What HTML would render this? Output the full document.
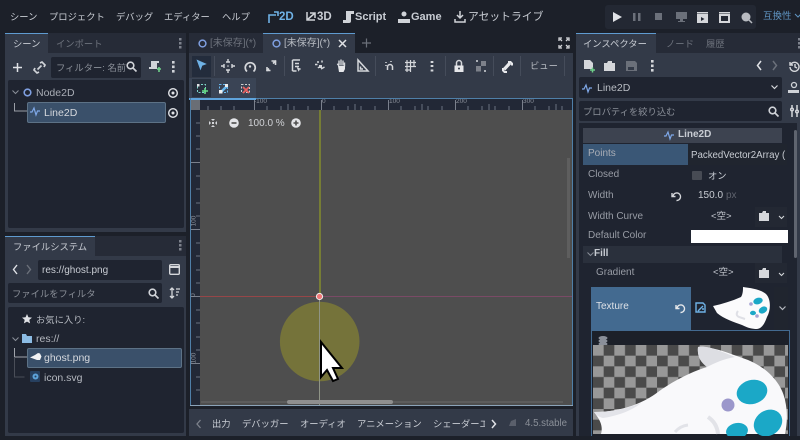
<!DOCTYPE html>
<html lang="ja"><head><meta charset="utf-8"><title>Godot</title>
<style>
html,body{margin:0;padding:0;background:#1c2029}
#r{position:relative;width:800px;height:440px;overflow:hidden;background:#1c2029;font-family:"Liberation Sans","Noto Sans CJK JP",sans-serif;font-size:10px;color:#c8ccd3;filter:blur(.3px)}
#r div,#r span.t{position:absolute}
.t{white-space:nowrap;line-height:16px;margin-top:1px}
.j{font-size:9.3px}
.m{color:#a4a8b0}
.p{background:#333a48}
.k{background:#1f2430}
svg{position:absolute;overflow:visible}
</style></head><body><div id="r">

<!-- top menu -->
<span class="t j" style="left:10px;top:8px">シーン</span>
<span class="t j" style="left:49px;top:8px">プロジェクト</span>
<span class="t j" style="left:116px;top:8px">デバッグ</span>
<span class="t j" style="left:164px;top:8px">エディター</span>
<span class="t j" style="left:222px;top:8px">ヘルプ</span>
<svg style="left:267px;top:10px" width="14" height="14" fill="none" stroke="#6fb2e6" stroke-width="1.600"><path d="M2 13V5h7M7 2h4v4"/></svg>
<span class="t" style="left:279px;top:8px;font-size:11.500px;font-weight:bold;color:#6fb2e6">2D</span>
<svg style="left:305px;top:11px" width="12" height="12" fill="none" stroke="#d0d3d8" stroke-width="1.500"><path d="M2 1v8h8M5 2l5 0v5M2 9l8-7"/></svg>
<span class="t" style="left:317px;top:8px;font-size:11.500px;font-weight:bold">3D</span>
<svg style="left:343px;top:11px" width="11" height="12" fill="#d0d3d8"><path d="M3 0h8v3H8v7a2 2 0 0 1-2 2H0V9h3z"/></svg>
<span class="t" style="left:355px;top:8px;font-size:11px;font-weight:bold">Script</span>
<svg style="left:398px;top:11px" width="12" height="12" fill="#d0d3d8"><circle cx="6" cy="3" r="2.500"/><path d="M0 8h12v4H0z"/></svg>
<span class="t" style="left:411px;top:8px;font-size:11px;font-weight:bold">Game</span>
<svg style="left:454px;top:10px" width="12" height="13" fill="none" stroke="#d0d3d8" stroke-width="1.500"><path d="M6 1v7M3 5l3 3 3-3M1 9v3h10V9"/></svg>
<span class="t" style="left:468px;top:8px;font-size:10.800px">アセットライブ</span>

<div style="left:605px;top:5px;width:151px;height:24px;background:#232833;border-radius:3px"></div>
<svg style="left:612px;top:11px" width="140" height="13">
<path d="M1 1l9 5-9 5z" fill="#e0e2e6"/>
<path d="M21 2h2.500v8H21zM26 2h2.500v8H26z" fill="#6b707a"/>
<path d="M43 2h7v7h-7z" fill="#6b707a"/>
<path d="M64 1h11v7h-4v2h2v1h-7v-1h2V8h-4z" fill="#6b707a"/>
<path d="M85 3h11v9H85zM85 1h11v1.500H85z" fill="#d5d7db"/><path d="M89 6l3.500 2L89 10z" fill="#232833"/>
<path d="M107 3h11v9h-11zM107 1h11v1.500h-11z" fill="#d5d7db"/><path d="M109 5h7v5h-7z" fill="#232833"/>
<circle cx="134" cy="6" r="4.500" fill="#b8bbc1"/><path d="M137 9l3 3" stroke="#b8bbc1" stroke-width="1.500"/>
</svg>
<span class="t" style="left:763px;top:8px;font-size:9.500px;color:#5f94c2">互換性</span>
<svg style="left:795px;top:14px" width="5" height="5" fill="none" stroke="#5f94c2"><path d="M0 0l3 3 3-3"/></svg>

<!-- scene panel -->
<div class="p" style="left:5px;top:53px;width:181px;height:179px"></div>
<div class="p" style="left:5px;top:33px;width:43px;height:20px;border-top:1px solid #5f9bd0;box-sizing:border-box"></div>
<div style="left:48px;top:33px;width:138px;height:20px;background:#262b37"></div>
<span class="t j" style="left:13px;top:35px">シーン</span>
<span class="t j" style="left:56px;top:35px;color:#6d727c">インポート</span>
<svg style="left:179px;top:38px" width="4" height="11" fill="#7d828c"><rect width="2.500" height="2.500"/><rect y="4" width="2.500" height="2.500"/><rect y="8" width="2.500" height="2.500"/></svg>
<svg style="left:12px;top:62px" width="11" height="11" stroke="#e0e2e6" stroke-width="1.500"><path d="M5.500 1v9M1 5.500h9"/></svg>
<svg style="left:33px;top:61px" width="13" height="13" fill="none" stroke="#d0d3d8" stroke-width="1.700"><path d="M4.500 8.500l4-4M2 7l-1 2 3 3 2-1M7 2l2-1 3 3-1 2"/></svg>
<div class="k" style="left:51px;top:57px;width:90px;height:21px;border-radius:2px"></div>
<span class="t j m" style="left:56px;top:59px;width:70px;overflow:hidden;color:#8b9099">フィルター: 名前</span>
<svg style="left:126px;top:61px" width="11" height="11" fill="none" stroke="#d0d3d8" stroke-width="1.600"><circle cx="4.500" cy="4.500" r="3.300"/><path d="M7 7l3.500 3.500"/></svg>
<svg style="left:148px;top:60px" width="13" height="14"><path d="M3 1h8v2H9v6H1V7h2z" fill="#d0d3d8"/><path d="M9 9h4M11 7v5" stroke="#6fd08a" stroke-width="1.600"/></svg>
<svg style="left:172px;top:61px" width="4" height="12" fill="#d0d3d8"><rect width="2.600" height="2.600"/><rect y="4.500" width="2.600" height="2.600"/><rect y="9" width="2.600" height="2.600"/></svg>
<div class="k" style="left:8px;top:80px;width:176px;height:148px;border-radius:2px"></div>
<svg style="left:12px;top:90px" width="7" height="5" fill="none" stroke="#8a8f99"><path d="M.5.500l3 3 3-3"/></svg>
<svg style="left:23px;top:88px" width="10" height="10" fill="none" stroke="#7f9fe0" stroke-width="1.600"><circle cx="4.500" cy="4.500" r="3.300"/></svg>
<span class="t" style="left:36px;top:84px;font-size:10.500px;color:#a9adb5">Node2D</span>
<svg style="left:167px;top:87px" width="12" height="12" fill="none" stroke="#e0e2e6" stroke-width="1.400"><circle cx="6" cy="6" r="4.300"/><circle cx="6" cy="6" r=".8" fill="#e0e2e6"/></svg>
<svg style="left:14px;top:103px" width="14" height="10" fill="none" stroke="#9a9ea6" stroke-width="1"><path d="M.5 0v8h13"/></svg>
<div style="left:27px;top:102px;width:137px;height:19px;background:#3a506a;border:1px solid #5d7286;border-radius:2px"></div>
<svg style="left:30px;top:107px" width="10" height="9" fill="none" stroke="#7fa8e8" stroke-width="1.200"><path d="M0 5h2l2-4 2 7 1.500-4H10"/></svg>
<span class="t" style="left:44px;top:104px;font-size:10.500px;color:#d5d8dd">Line2D</span>
<svg style="left:167px;top:107px" width="12" height="12" fill="none" stroke="#e0e2e6" stroke-width="1.400"><circle cx="6" cy="6" r="4.300"/><circle cx="6" cy="6" r=".8" fill="#e0e2e6"/></svg>

<!-- filesystem panel -->
<div class="p" style="left:5px;top:256px;width:181px;height:180px"></div>
<div class="p" style="left:5px;top:236px;width:90px;height:20px;border-top:1px solid #5f9bd0;box-sizing:border-box"></div>
<div style="left:95px;top:236px;width:91px;height:20px;background:#262b37"></div>
<span class="t j" style="left:13px;top:238px">ファイルシステム</span>
<svg style="left:179px;top:240px" width="4" height="11" fill="#7d828c"><rect width="2.500" height="2.500"/><rect y="4" width="2.500" height="2.500"/><rect y="8" width="2.500" height="2.500"/></svg>
<svg style="left:12px;top:264px" width="24" height="11" fill="none" stroke-width="1.400"><path d="M5 1L1.500 5.500 5 10" stroke="#e0e2e6"/><path d="M15 1l3.500 4.500L15 10" stroke="#6b707a"/></svg>
<div class="k" style="left:38px;top:260px;width:124px;height:20px;border-radius:2px"></div>
<span class="t" style="left:42px;top:262px;font-size:10px">res://ghost.png</span>
<svg style="left:169px;top:264px" width="12" height="11" fill="none" stroke="#d5d7db" stroke-width="1.400"><rect x=".7" y=".7" width="9.600" height="9.600" rx="1"/><path d="M1 3h9" stroke-width="2"/></svg>
<div class="k" style="left:8px;top:283px;width:154px;height:20px;border-radius:2px"></div>
<span class="t j" style="left:12px;top:285px;color:#8b9099">ファイルをフィルタ</span>
<svg style="left:148px;top:288px" width="11" height="11" fill="none" stroke="#d0d3d8" stroke-width="1.600"><circle cx="4.500" cy="4.500" r="3.300"/><path d="M7 7l3.500 3.500"/></svg>
<svg style="left:169px;top:288px" width="12" height="12" fill="none" stroke="#d5d7db" stroke-width="1.300"><path d="M3 0v10M1 2l2-2 2 2M1 8l2 2 2-2M7 1h4M7 4h3M7 7h2"/></svg>
<div class="k" style="left:8px;top:307px;width:176px;height:126px;border-radius:2px"></div>
<svg style="left:22px;top:314px" width="10" height="10" fill="#e0e2e6"><path d="M5 0l1.400 3.300 3.600.3-2.700 2.300.8 3.500L5 7.600 1.900 9.400l.8-3.500L0 3.600l3.600-.3z"/></svg>
<span class="t j" style="left:36px;top:311px;color:#b5b9c0">お気に入り:</span>
<svg style="left:12px;top:337px" width="7" height="5" fill="none" stroke="#8a8f99"><path d="M.5.500l3 3 3-3"/></svg>
<svg style="left:22px;top:334px" width="10" height="9" fill="#8cbce4"><path d="M0 0h4l1 2h5v7H0z"/></svg>
<span class="t" style="left:36px;top:330px;font-size:10.500px;color:#b5b9c0">res://</span>
<svg style="left:14px;top:348px" width="14" height="32" fill="none"><path d="M.5 0v9h13" stroke="#a0a4ab"/><path d="M.5 9v20h10" stroke="#4a4e58"/></svg>
<div style="left:27px;top:348px;width:153px;height:18px;background:#3a506a;border:1px solid #5d7286;border-radius:2px"></div>
<svg style="left:30px;top:352px" width="12" height="10" fill="#f2f3f5"><path d="M0 5.500 5 3 8 1l2 .5 1.500 3L10 8H7L3 6.500z"/></svg>
<span class="t" style="left:44px;top:349px;font-size:10.500px;color:#d5d8dd">ghost.png</span>
<div style="left:30px;top:371px;width:10px;height:11px;background:#27405f;border-radius:1px"></div>
<svg style="left:32px;top:373px" width="7" height="7"><circle cx="3.500" cy="3.500" r="3" fill="#5da3da"/><circle cx="3.500" cy="3.500" r="1" fill="#27405f"/></svg>
<span class="t" style="left:44px;top:369px;font-size:10.500px;color:#b5b9c0">icon.svg</span>

<!-- center tabs -->
<div style="left:189px;top:33px;width:74px;height:20px;background:#262b37"></div>
<div style="left:263px;top:33px;width:92px;height:20px;background:#333a48;border-top:1px solid #5f9bd0;box-sizing:border-box"></div>
<svg style="left:198px;top:39px" width="9" height="9" fill="none" stroke="#7f9fe0" stroke-width="1.500"><circle cx="4.500" cy="4.500" r="3.400"/></svg>
<span class="t" style="left:210px;top:35px;font-size:10px;color:#6d727c">[未保存](*)</span>
<svg style="left:272px;top:39px" width="9" height="9" fill="none" stroke="#7f9fe0" stroke-width="1.500"><circle cx="4.500" cy="4.500" r="3.400"/></svg>
<span class="t" style="left:284px;top:35px;font-size:10px;color:#b9bdc4">[未保存](*)</span>
<svg style="left:338px;top:39px" width="9" height="9" stroke="#e0e2e6" stroke-width="1.500"><path d="M1 1l7 7M8 1L1 8"/></svg>
<svg style="left:361px;top:38px" width="11" height="11" stroke="#6b707a" stroke-width="1.200"><path d="M5.500.500v9M1 5h9"/></svg>
<svg style="left:559px;top:38px" width="10" height="10" fill="none" stroke="#d5d7db" stroke-width="1.300"><path d="M0 3V0h3M7 0h3v3M10 7v3H7M3 10H0V7M1 1l2 2M9 1L7 3M9 9L7 7M1 9l2-2"/></svg>

<!-- toolbar -->
<div class="p" style="left:189px;top:53px;width:384px;height:45px"></div>
<div style="left:192px;top:56px;width:19px;height:21px;background:#232c3c"></div>
<div style="left:214px;top:56px;width:1px;height:20px;background:#454c5a"></div>
<div style="left:284px;top:56px;width:1px;height:20px;background:#454c5a"></div>
<div style="left:375px;top:56px;width:1px;height:20px;background:#454c5a"></div>
<div style="left:445px;top:56px;width:1px;height:20px;background:#454c5a"></div>
<div style="left:493px;top:56px;width:1px;height:20px;background:#454c5a"></div>
<div style="left:520px;top:56px;width:1px;height:20px;background:#454c5a"></div>
<div style="left:564px;top:56px;width:1px;height:20px;background:#454c5a"></div>
<div style="left:189px;top:78px;width:67px;height:20px;background:#3a4455"></div>
<div style="left:192px;top:79px;width:19px;height:18px;background:#27303e"></div>
<svg style="left:0;top:0" width="800" height="100" fill="none" stroke="#d5d7db" stroke-width="1.300">
<path d="M197 60l9 4-4 1.500-1.500 4z" fill="#6fb2e6" stroke="#6fb2e6" stroke-width=".6"/>
<path d="M226 62h4M226 70h4M224 64v4M232 64v4M228 59v2.500M228 70.500v2.500M221 66h2.500M232.500 66h2.500" stroke-width="1.400"/><circle cx="228" cy="66" r=".8" fill="#d5d7db" stroke="none"/>
<path d="M247 71.500a5 5 0 1 1 6.500 0" stroke-width="1.700"/><circle cx="250" cy="66.500" r="1.200" fill="#d5d7db" stroke="none"/>
<path d="M267 67v3.500h3.500M266.500 71l2.500-2.500M271.500 61h4v4M276 60.500l-3 3" stroke-width="1.600"/>
<path d="M292.500 60h7.500M292.500 60v11M292.500 71h4M295 63.500h4M295 66.500h4" stroke-width="1.500"/><path d="M297 67.500l4 1.500-1.700.6-.6 1.700z" fill="#d5d7db" stroke-width=".5"/>
<path d="M315 64.500h2.500M318 61v2M322 60.500v2M321 69l3.500-2M318 68l1-1" stroke-width="1.500"/><rect x="319" y="65" width="3" height="3" fill="#d5d7db" stroke="none"/>
<path d="M337 64.500l1.500-.5v2M339 60.500v5M341 59.500v6M343 60.500v5M344.500 62.500v4" stroke-width="1.400"/><path d="M338 66h7v3l-1.500 3h-4.500z" fill="#e6e7ea" stroke="none"/>
<path d="M358 60v11h10zM360.500 66.500v2.500h2.500" stroke-width="1.500"/>
<path d="M386 62v1M386 65v1M391 61v1M387.500 70v-3a2.500 2.500 0 0 1 5 0v3" stroke-width="1.500"/>
<path d="M407 60v12M410.500 60v12M414 60v7M405 62.500h11M405 66.500h11M405 70h6" stroke-width="1.200"/>
<path d="M432 61v2M432 65v2M432 69.500v2" stroke-width="2.700"/>
<path d="M454.500 65.500h9v6.500h-9z" fill="#e6e7ea" stroke="none"/><path d="M456.500 65.500V63a2.500 2.500 0 0 1 5 0v2.500" stroke-width="1.500"/><circle cx="459" cy="68.500" r="1" fill="#333a48" stroke="none"/>
<path d="M476 66h5v5.500h-5zM481 61h5v5h-5z" fill="#7d818a" stroke="none"/><path d="M476 61h2M486 71h-2" stroke-width="1.500"/>
<path d="M504 69.500l6-6.500" stroke="#e8e9ec" stroke-width="3.200"/><path d="M503 68v2.500l1.500 1.500h2.500M508 62h2.500l1.500 1.500v2" stroke="#e8e9ec" stroke-width="2"/>
<g stroke-width="1"><rect x="197.500" y="84.500" width="8" height="8" stroke="#7cd4c8" stroke-dasharray="2 1.500"/><path d="M202 91h6M205 88v6" stroke="#66dd88" stroke-width="1.600"/><rect x="197" y="84" width="2.500" height="2.500" fill="#dfe2e6" stroke="none"/>
<rect x="219.500" y="84.500" width="8" height="8" stroke="#66b8f0" stroke-dasharray="2 1.500"/><path d="M221 92l6-6" stroke="#66b8f0" stroke-width="2.500"/><rect x="219" y="90" width="3.500" height="3.500" fill="#eee" stroke="none"/><rect x="225" y="84" width="3" height="3" fill="#eee" stroke="none"/>
<rect x="241.500" y="84.500" width="8" height="8" stroke="#cfcfcf" stroke-dasharray="2 1.500"/><path d="M243 87l6 6M249 87l-6 6" stroke="#e8605f" stroke-width="1.800"/></g>
</svg>
<span class="t j" style="left:530px;top:57px;color:#b5b9c0;letter-spacing:0">ビュー</span>

<!-- viewport -->
<div style="left:190px;top:98px;width:383px;height:308px;background:#4e4e4e"></div>
<div style="left:190px;top:98px;width:383px;height:12px;background:#222836"></div>
<div style="left:190px;top:98px;width:10px;height:308px;background:#222836"></div>
<div style="left:190px;top:100px;width:10px;height:10px;background:#6a6e75"></div>
<svg style="left:190px;top:98px" width="383" height="308" fill="none" stroke="#6b7280" stroke-width="1">
<path d="M64.500 2v10M131.500 2v10M198.500 2v10M265.500 2v10M332.500 2v10M0 198.500h10M0 131.500h10M0 64.500h10M0 265.500h10" stroke="#7a808c"/>
<path d="M18 8v4M31 8v4M44 8v4M98 6v6M165 6v6M232 6v6M299 6v6M366 6v6M77 8v4M91 8v4M104 8v4M118 8v4M144 8v4M158 8v4M171 8v4M185 8v4M211 8v4M225 8v4M238 8v4M252 8v4M278 8v4M292 8v4M305 8v4M319 8v4M345 8v4M359 8v4M372 8v4M6 25h4M6 38h4M6 51h4M6 78h4M6 91h4M6 105h4M6 118h4M6 145h4M6 158h4M6 172h4M6 185h4M6 212h4M6 225h4M6 239h4M6 252h4M6 279h4M6 292h4"/>
</svg>
<span class="t" style="left:254px;top:97px;font-size:6.500px;line-height:8px;color:#8a8f99">-100</span>
<span class="t" style="left:322px;top:97px;font-size:6.500px;line-height:8px;color:#8a8f99">0</span>
<span class="t" style="left:389px;top:97px;font-size:6.500px;line-height:8px;color:#8a8f99">100</span>
<span class="t" style="left:456px;top:97px;font-size:6.500px;line-height:8px;color:#8a8f99">200</span>
<span class="t" style="left:523px;top:97px;font-size:6.500px;line-height:8px;color:#8a8f99">300</span>
<span class="t" style="left:189px;top:216px;font-size:6.500px;line-height:8px;color:#8a8f99;transform:rotate(-90deg)">100</span>
<span class="t" style="left:192px;top:290px;font-size:6.500px;line-height:8px;color:#8a8f99;transform:rotate(-90deg)">0</span>
<span class="t" style="left:189px;top:353px;font-size:6.500px;line-height:8px;color:#8a8f99;transform:rotate(-90deg)">100</span>
<div style="left:189px;top:98px;width:67px;height:2px;background:#5fa4dc"></div>
<div style="left:256px;top:98px;width:317px;height:1px;background:#4f7fa8"></div>
<div style="left:190px;top:98px;width:1px;height:308px;background:#4f7fa8"></div>
<div style="left:572px;top:98px;width:1px;height:308px;background:#4f7fa8"></div>
<div style="left:190px;top:405px;width:383px;height:1px;background:#8ba3b8"></div>

<!-- axes + circle -->
<div style="left:319px;top:110px;width:2px;height:186px;background:#767d35"></div>
<div style="left:200px;top:296px;width:119px;height:1px;background:#964648"></div>
<div style="left:320px;top:296px;width:252px;height:1px;background:#7a4a66"></div>
<svg style="left:280px;top:302px" width="80" height="80"><circle cx="39.700" cy="39.500" r="39.800" fill="#75733a"/></svg>
<div style="left:319px;top:297px;width:1px;height:108px;background:#8f9486"></div>
<svg style="left:314.500px;top:291.500px" width="9" height="9"><circle cx="4.500" cy="4.500" r="3.100" fill="#f07878" stroke="#eee" stroke-width="1"/></svg>
<svg style="left:320px;top:341px" width="25" height="42"><path d="M1 1v35l6-7 6 11 5-2-5-11h9z" fill="#fff" stroke="#000" stroke-width="2" stroke-linejoin="miter"/></svg>

<!-- zoom controls -->
<svg style="left:208px;top:118px" width="10" height="10" fill="#d5d7db"><path d="M3 1h4L5 3zM3 9h4L5 7zM1 3v4l2-2zM9 3v4L7 5z"/><rect x="4" y="4" width="2" height="2"/></svg>
<svg style="left:229px;top:118px" width="10" height="10"><circle cx="5" cy="5" r="4.800" fill="#e4e5e8"/><path d="M2.500 5h5" stroke="#4e4e4e" stroke-width="1.600"/></svg>
<span class="t" style="left:248px;top:115px;font-size:10px;color:#d0d2d6">100.0 %</span>
<svg style="left:291px;top:118px" width="10" height="10"><circle cx="5" cy="5" r="4.800" fill="#e4e5e8"/><path d="M2.500 5h5M5 2.500v5" stroke="#4e4e4e" stroke-width="1.600"/></svg>

<!-- scrollbars -->
<div style="left:201px;top:401px;width:362px;height:2px;background:#5c5c5c"></div>
<div style="left:287px;top:400px;width:106px;height:4px;background:#8f8f8f;border-radius:2px"></div>
<div style="left:567px;top:158px;width:3px;height:100px;background:#5e5e5e"></div>

<!-- bottom bar -->
<div class="p" style="left:189px;top:409px;width:384px;height:27px"></div>
<svg style="left:196px;top:419px" width="6" height="10" fill="none" stroke="#7d828c" stroke-width="1.300"><path d="M4.500 1L1 5l3.500 4"/></svg>
<span class="t j" style="left:212px;top:415px">出力</span>
<span class="t j" style="left:242px;top:415px">デバッガー</span>
<span class="t j" style="left:300px;top:415px">オーディオ</span>
<span class="t j" style="left:357px;top:415px">アニメーション</span>
<span class="t j" style="left:433px;top:415px;width:52px;overflow:hidden">シェーダーエディタ</span>
<svg style="left:491px;top:419px" width="6" height="10" fill="none" stroke="#e0e2e6" stroke-width="1.500"><path d="M1 1l3.500 4L1 9"/></svg>
<svg style="left:508px;top:418px" width="10" height="11" fill="#5a5f6b"><path d="M8 1v7H1l2-5z"/></svg>
<span class="t" style="left:525px;top:415px;font-size:9.700px;color:#8b9099">4.5.stable</span>

<!-- inspector -->
<div class="p" style="left:576px;top:53px;width:224px;height:383px"></div>
<div class="p" style="left:576px;top:33px;width:80px;height:20px;border-top:1px solid #5f9bd0;box-sizing:border-box"></div>
<div style="left:656px;top:33px;width:144px;height:20px;background:#262b37"></div>
<span class="t j" style="left:583px;top:35px">インスペクター</span>
<span class="t j" style="left:666px;top:35px;color:#6d727c">ノード</span>
<span class="t j" style="left:706px;top:35px;color:#6d727c">履歴</span>
<svg style="left:798px;top:38px" width="3" height="11" fill="#7d828c"><rect width="2.500" height="2.500"/><rect y="4" width="2.500" height="2.500"/><rect y="8" width="2.500" height="2.500"/></svg>
<svg style="left:583px;top:60px" width="200" height="13">
<path d="M1 0h6l3 3v6H1z" fill="#d5d7db"/><path d="M7 10h5M9.500 7.500v5" stroke="#6fd08a" stroke-width="1.500"/>
<path d="M21 3h3l1-2h4v2h3v8H21z" fill="#d5d7db"/>
<path d="M43 1h9l2 2v8H43z" fill="#6b707a"/><rect x="45" y="7" width="6" height="3" fill="#333a48"/>
<rect x="68" y="0" width="2.600" height="2.600" fill="#d5d7db"/><rect x="68" y="4.500" width="2.600" height="2.600" fill="#d5d7db"/><rect x="68" y="9" width="2.600" height="2.600" fill="#d5d7db"/>
<path d="M178 1l-3.500 4.500L178 10" fill="none" stroke="#e0e2e6" stroke-width="1.500"/>
<path d="M190 1l3.500 4.500L190 10" fill="none" stroke="#6b707a" stroke-width="1.500"/>
</svg>
<svg style="left:789px;top:61px" width="11" height="11" fill="none" stroke="#d5d7db" stroke-width="1.400"><path d="M2 3a4.500 4.500 0 1 1-1 3M1 1v3h3M6 3v3l2 1"/></svg>
<div class="k" style="left:579px;top:77px;width:203px;height:21px;border-radius:2px"></div>
<svg style="left:582px;top:84px" width="10" height="9" fill="none" stroke="#7fa8e8" stroke-width="1.200"><path d="M0 5h2l2-4 2 7 1.500-4H10"/></svg>
<span class="t" style="left:597px;top:79px;font-size:10.500px;color:#b9bdc4">Line2D</span>
<svg style="left:771px;top:85px" width="7" height="5" fill="none" stroke="#d5d7db" stroke-width="1.200"><path d="M.5.500l3 3 3-3"/></svg>
<svg style="left:788px;top:81px" width="12" height="13" fill="#d0d3d8"><circle cx="6" cy="4" r="2.500" fill="none" stroke="#d0d3d8" stroke-width="1.300"/><path d="M0 9h11v3H0z"/></svg>
<div class="k" style="left:579px;top:101px;width:203px;height:20px;border-radius:2px"></div>
<span class="t j" style="left:583px;top:103px;color:#8b9099">プロパティを絞り込む</span>
<svg style="left:768px;top:106px" width="11" height="11" fill="none" stroke="#d0d3d8" stroke-width="1.600"><circle cx="4.500" cy="4.500" r="3.300"/><path d="M7 7l3.500 3.500"/></svg>
<svg style="left:790px;top:105px" width="10" height="12" fill="none" stroke="#d5d7db" stroke-width="1.500"><path d="M2 0v3M2 6v6M7 0v5M7 8v4"/><circle cx="2" cy="4.500" r="1.300"/><circle cx="7" cy="6.500" r="1.300"/></svg>
<div class="k" style="left:579px;top:123px;width:218px;height:313px"></div>
<div style="left:583px;top:128px;width:199px;height:15px;background:#3d4350"></div>
<svg style="left:664px;top:131px" width="10" height="9" fill="none" stroke="#7fa8e8" stroke-width="1.200"><path d="M0 5h2l2-4 2 7 1.500-4H10"/></svg>
<span class="t" style="left:678px;top:126px;font-size:10px;font-weight:bold;color:#c8ccd3">Line2D</span>
<div style="left:583px;top:144px;width:105px;height:21px;background:#3a5776"></div>
<div style="left:688px;top:144px;width:99px;height:21px;background:#20252f"></div>
<span class="t" style="left:588px;top:145px;color:#a9adb5">Points</span>
<span class="t" style="left:691px;top:147px;font-size:9.700px;width:96px;overflow:hidden">PackedVector2Array (</span>
<span class="t" style="left:588px;top:166px;color:#989ca5">Closed</span>
<div style="left:692px;top:171px;width:10px;height:9px;background:#474b54;border-radius:1px"></div>
<span class="t j" style="left:708px;top:167px">オン</span>
<span class="t" style="left:588px;top:187px;color:#989ca5">Width</span>
<svg style="left:671px;top:191px" width="11" height="11" fill="none" stroke="#d5d7db" stroke-width="1.400"><path d="M2 5a3.800 3.800 0 1 1 3.500 4.500M1 2v3.500h3.500"/></svg>
<span class="t" style="left:698px;top:187px">150.0</span>
<span class="t" style="left:726px;top:187px;color:#5f636d">px</span>
<span class="t" style="left:588px;top:208px;color:#989ca5">Width Curve</span>
<span class="t" style="left:711px;top:208px;font-size:9.500px">&lt;空&gt;</span>
<div style="left:755px;top:207px;width:32px;height:20px;background:#232833"></div>
<svg style="left:759px;top:211px" width="27" height="12" fill="#d5d7db"><path d="M0 2h3l1-2h3v2h3v8H0z"/><path d="M20 5l2.500 2.500L25 5" fill="none" stroke="#d5d7db" stroke-width="1.100"/></svg>
<span class="t" style="left:588px;top:227px;color:#989ca5">Default Color</span>
<div style="left:691px;top:230px;width:97px;height:13px;background:#fff"></div>
<div style="left:583px;top:246px;width:199px;height:17px;background:#2a303c"></div>
<svg style="left:587px;top:252px" width="7" height="5" fill="none" stroke="#8a8f99"><path d="M.5.500l3 3 3-3"/></svg>
<span class="t" style="left:594px;top:245px;font-weight:bold;color:#c8ccd3">Fill</span>
<span class="t" style="left:596px;top:264px;color:#989ca5">Gradient</span>
<span class="t" style="left:713px;top:264px;font-size:9.500px">&lt;空&gt;</span>
<div style="left:755px;top:263px;width:32px;height:20px;background:#232833"></div>
<svg style="left:759px;top:268px" width="27" height="12" fill="#d5d7db"><path d="M0 2h3l1-2h3v2h3v8H0z"/><path d="M20 5l2.500 2.500L25 5" fill="none" stroke="#d5d7db" stroke-width="1.100"/></svg>
<div style="left:794px;top:130px;width:3px;height:128px;background:#5f646f;border-radius:2px"></div>

<!-- texture row -->
<div style="left:591px;top:287px;width:100px;height:43px;background:#436a90"></div>
<span class="t" style="left:596px;top:298px;color:#dde1e6">Texture</span>
<svg style="left:675px;top:303px" width="11" height="11" fill="none" stroke="#e6e8eb" stroke-width="1.400"><path d="M2 5a3.800 3.800 0 1 1 3.500 4.500M1 2v3.500h3.500"/></svg>
<svg style="left:695px;top:302px" width="11" height="11" fill="none" stroke="#6fb2e6" stroke-width="1.400"><path d="M1 1h7l2 2v7H1zM3 9l5-5M7 7h2"/></svg>
<div style="left:774px;top:287px;width:14px;height:43px;background:#20252f"></div>
<svg style="left:779px;top:306px" width="7" height="5" fill="none" stroke="#b5b9c0" stroke-width="1.200"><path d="M.5.500l3 3 3-3"/></svg>
<svg style="left:712px;top:286px" width="62" height="46">
<path d="M1 20C10 18 20 15 29 11C31 8 31 4 31 1C38 2 48 3 54 8C59 13 59 24 55 31C53 36 51 42 45 43C40 43 36 42 30 39C22 36 12 33 5 27Z" fill="#fbfbfc"/>
<path d="M26 25q-3 4 1 6l6 2" fill="none" stroke="#dfe0e6" stroke-width="2"/>
<ellipse cx="46" cy="15" rx="4.800" ry="3.200" fill="#1ba8c7" transform="rotate(-15 46 15)"/>
<ellipse cx="51" cy="24" rx="4.500" ry="3.200" fill="#1ba8c7" transform="rotate(-30 51 24)"/>
<ellipse cx="41" cy="27" rx="3" ry="2.200" fill="#1ba8c7"/>
<circle cx="39" cy="18" r="1.800" fill="#a6a3d2"/>
<circle cx="45" cy="30" r="1.800" fill="#a6a3d2"/>
</svg>

<!-- preview -->
<div style="left:591px;top:330px;width:199px;height:106px;background:#1c2029;border:1px solid #436a90;box-sizing:border-box;border-bottom:none"></div>
<svg style="left:598px;top:336px" width="10" height="10" fill="#8a8f99"><ellipse cx="5" cy="2" rx="4.500" ry="2"/><ellipse cx="5" cy="5" rx="4.500" ry="2"/><ellipse cx="5" cy="8" rx="4.500" ry="2"/></svg>
<svg style="left:593px;top:345px" width="195" height="89">
<defs><pattern id="c" width="21.340" height="21.340" patternUnits="userSpaceOnUse"><rect width="21.340" height="21.340" fill="#4a4a4a"/><rect width="10.670" height="10.670" fill="#989898"/><rect x="10.670" y="10.670" width="10.670" height="10.670" fill="#989898"/></pattern></defs>
<rect width="195" height="89" fill="url(#c)"/>
<path d="M1 67C25 67 48 60 65 47C80 36 98 27 114 22C108 17 104 12 105 2C120 1 140 10 155 15C172 22 188 36 192 55C195 68 194 80 192 89H8C10 82 8 76 1 67Z" fill="#f9f9fb"/>
<path d="M105 2C112 0 125 5 142 12C130 14 122 18 114 22C108 17 104 12 105 2Z" fill="#dddee3"/>
<path d="M1 67C20 67 35 63 48 58C40 65 25 71 10 73C6 72 3 70 1 67Z" fill="#e3e4e9"/>
<path d="M115 72Q124 78 125 89" fill="none" stroke="#e2e3e8" stroke-width="4"/>
<path d="M82 87Q87 81 95 80" fill="none" stroke="#e2e3e8" stroke-width="3"/>
<ellipse cx="159" cy="47" rx="15.500" ry="12" fill="#1ba8c7" transform="rotate(-15 159 47)"/>
<ellipse cx="175" cy="78" rx="15" ry="12.500" fill="#1ba8c7" transform="rotate(-35 175 78)"/>
<ellipse cx="144" cy="86" rx="11" ry="8" fill="#1ba8c7" transform="rotate(-10 144 86)"/>
<ellipse cx="135" cy="60" rx="6.500" ry="6.500" fill="#9b97cb"/>
</svg>
<div style="left:0;top:436px;width:800px;height:4px;background:#1c2029"></div>
</div></body></html>
